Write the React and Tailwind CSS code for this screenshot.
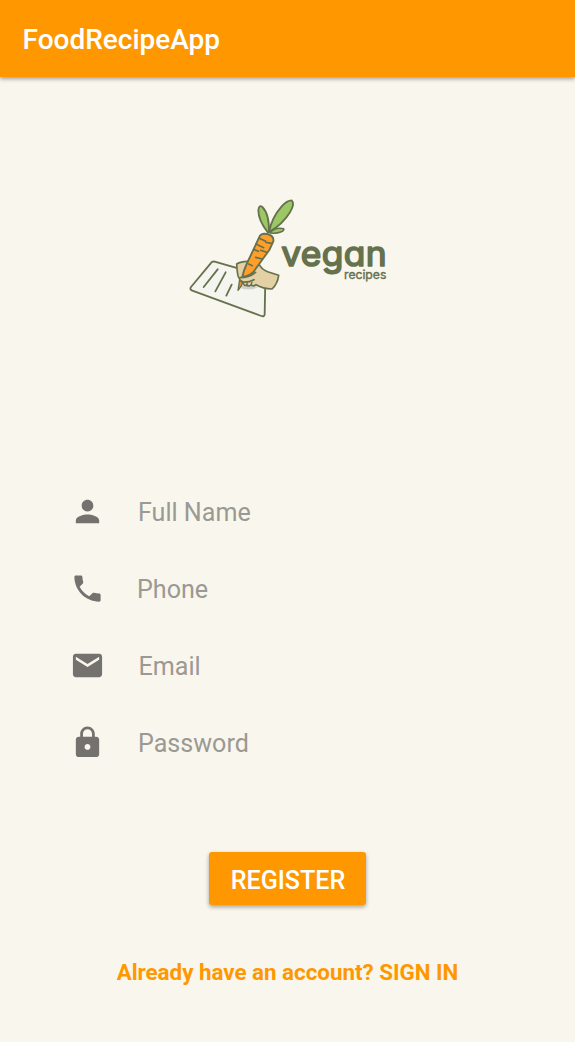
const icons = {
  person: 'M12 12c2.21 0 4-1.79 4-4s-1.79-4-4-4-4 1.79-4 4 1.79 4 4 4zm0 2c-2.67 0-8 1.34-8 4v2h16v-2c0-2.66-5.33-4-8-4z',
  phone: 'M6.62 10.79c1.44 2.83 3.76 5.14 6.59 6.59l2.2-2.2c.27-.27.67-.36 1.02-.24 1.12.37 2.33.57 3.57.57.55 0 1 .45 1 1V20c0 .55-.45 1-1 1-9.39 0-17-7.61-17-17 0-.55.45-1 1-1h3.5c.55 0 1 .45 1 1 0 1.25.2 2.45.57 3.57.11.35.03.74-.25 1.02l-2.2 2.2z',
  email: 'M20 4H4c-1.1 0-1.99.9-1.99 2L2 18c0 1.1.9 2 2 2h16c1.1 0 2-.9 2-2V6c0-1.1-.9-2-2-2zm0 4l-8 5-8-5V6l8 5 8-5v2z',
  lock: 'M18 8h-1V6c0-2.76-2.24-5-5-5S7 3.24 7 6v2H6c-1.1 0-2 .9-2 2v10c0 1.1.9 2 2 2h12c1.1 0 2-.9 2-2V10c0-1.1-.9-2-2-2zm-6 9c-1.1 0-2-.9-2-2s.9-2 2-2 2 .9 2 2-.9 2-2 2zm3.1-9H8.9V6c0-1.71 1.39-3.1 3.1-3.1 1.71 0 3.1 1.39 3.1 3.1v2z',
};

const fields = [
  { icon: 'person', label: 'Full Name', pad: 'pl-[33px]' },
  { icon: 'phone', label: 'Phone', pad: 'pl-8' },
  { icon: 'email', label: 'Email', pad: 'pl-[33.5px]' },
  { icon: 'lock', label: 'Password', pad: 'pl-[33px]' },
];

function Logo() {
  return (
    <svg className="h-[140px] w-[220px]" viewBox="0 0 660 420" role="img" aria-label="vegan recipes">
      <g stroke="#66714d" strokeWidth="5.5" strokeLinejoin="round" strokeLinecap="round">
        <path fill="#f5f5f0" d="M104 215 L250 257 Q256 260 256 267 L254 373 Q253 381 244 378 L37 302 Q28 298 33 291 L92 220 Q97 213 104 215Z" />
        <path fill="none" d="M113 238 L71 291 M137 247 L106 304 M155 284 L139 317" />
        <path fill="#d2d1c9" stroke="none" d="M186 287 L236 290 Q218 303 186 296Z" />
        <path fill="#ef8f2c" strokeWidth="4" d="M180 262 L174 301 L184 288 L190 274Z" />
        <path fill="#e3d1a5" strokeWidth="5" d="M170 222 Q184 213 207 214 L236 220 Q242 237 263 245 L296 256 Q293 281 276 297 Q249 296 228 284 Q221 291 213 285 Q207 291 200 285 Q192 290 188 276 L180 270 L174 258 Q171 244 170 222Z" />
        <path fill="#ff9e2b" d="M237 143 Q242 128 261 132 Q283 137 280 154 L268 180 L220 246 Q205 260 187 260 Q190 244 200 222Z" />
        <path fill="none" strokeWidth="5" d="M238 145 L257 154 M275 160 L258 157 M228 162 L251 173 M221 178 L235 184 M260 187 L242 181 M247 207 L227 202 M206 222 L217 227" />
        <path fill="none" strokeWidth="5" d="M180 263 Q207 263 227 247 M184 276 Q207 278 222 269" />
        <path fill="none" strokeWidth="4" d="M200 284 L202 278 M213 284 L216 277" />
        <path fill="#9bc864" d="M264 128 Q235 92 235 61 Q237 43 247 51 Q268 71 267 127Z" />
        <path fill="#9bc864" d="M267 126 Q275 83 305 49 Q321 31 335 31 Q345 40 331 65 Q307 104 267 126Z" />
        <path fill="#9bc864" strokeWidth="4.5" d="M269 128 Q288 110 311 116 Q314 122 302 126 Q287 132 269 128Z" />
      </g>
      <g fill="#66714d" stroke="#66714d" strokeLinejoin="round">
        <text x="304" y="229" fontSize="104" fontWeight="400" strokeWidth="5" textLength="317" lengthAdjust="spacingAndGlyphs" className="font-['Inter',sans-serif] tracking-[1px] [font-feature-settings:'cv11']">vegan</text>
        <text x="492" y="267" fontSize="37" fontWeight="400" strokeWidth="1.2" textLength="127" lengthAdjust="spacingAndGlyphs" className="font-['Inter',sans-serif]">recipes</text>
      </g>
    </svg>
  );
}

export default function App() {
  return (
    <div className="flex h-[1042px] w-[575px] flex-col overflow-hidden bg-[#f9f6ed] font-['Roboto',sans-serif]">
      <header className="flex h-[77px] shrink-0 items-center bg-[#ff9800] pl-[22.5px] pt-0.5 text-[28px] font-medium text-white shadow-[0_2px_4px_rgba(0,0,0,0.35)]">
        <h1>FoodRecipeApp</h1>
      </header>
      <main className="flex flex-1 flex-col items-center">
        <div className="mt-[113px] flex w-full pl-[180px]">
          <Logo />
        </div>
        <form className="mt-[143px] flex w-full flex-col pl-[70px]">
          {fields.map((f) => (
            <label key={f.label} className="flex h-[77px] items-center">
              <svg className="size-[35px] shrink-0" viewBox="0 0 24 24" fill="#73726e">
                <path d={icons[f.icon]} />
              </svg>
              <span className={`${f.pad} pt-0.5 text-[25.1px] text-[#9b9993]`}>{f.label}</span>
            </label>
          ))}
        </form>
        <button type="button" className="mt-[71px] h-[53px] w-[157px] rounded-[3px] bg-[#ff9800] pt-[5px] pl-px text-[25.1px] font-medium text-white shadow-[0_2px_4px_rgba(0,0,0,0.35)]">
          REGISTER
        </button>
        <a className="mt-[51px] text-[22.35px] font-bold text-[#ff9800]">Already have an account? SIGN IN</a>
      </main>
    </div>
  );
}
